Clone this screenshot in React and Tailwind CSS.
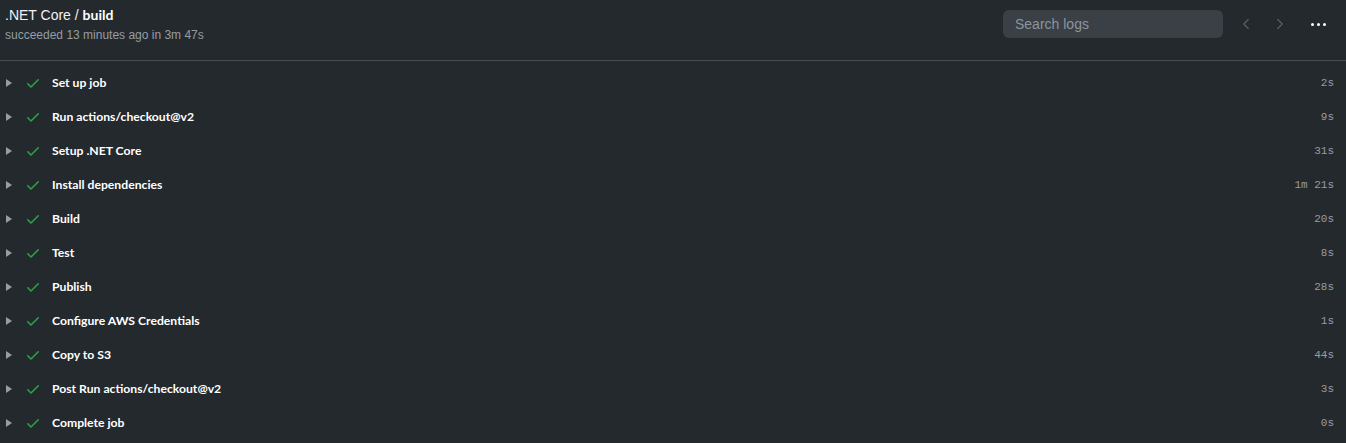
import { ChevronLeft, ChevronRight } from "lucide-react"

const steps = [
  ["Set up job", "2s"],
  ["Run actions/checkout@v2", "9s"],
  ["Setup .NET Core", "31s"],
  ["Install dependencies", "1m 21s"],
  ["Build", "20s"],
  ["Test", "8s"],
  ["Publish", "28s"],
  ["Configure AWS Credentials", "1s"],
  ["Copy to S3", "44s"],
  ["Post Run actions/checkout@v2", "3s"],
  ["Complete job", "0s"],
]

const Check = () => (
  <svg width="16" height="16" viewBox="0 0 16 16" className="text-[#28a745]">
    <path
      fill="currentColor"
      fillRule="evenodd"
      d="M13.78 4.22a.75.75 0 010 1.06l-7.25 7.25a.75.75 0 01-1.06 0L2.22 9.28a.75.75 0 011.06-1.06L6 10.94l6.72-6.72a.75.75 0 011.06 0z"
    />
  </svg>
)

const Caret = () => (
  <svg width="8" height="10" viewBox="0 0 8 10" className="text-[#959da5]">
    <path fill="currentColor" d="M1 1l6 4-6 4z" />
  </svg>
)

const App = () => {
  return (
    <div
      className="min-h-screen w-full bg-[#24292e] text-[#e1e4e8]"
      style={{ fontFamily: '"Segoe UI", "Liberation Sans", "Noto Sans", sans-serif' }}
    >
      {/* Header */}
      <div className="flex items-start h-[61px] pl-[5px] pr-[20px] pt-[5px] border-b border-[#444d56]">
        <div className="flex-1">
          <div className="text-[14px] leading-[20px] text-[#f0f2f4]">
            .NET Core / <span className="font-bold text-white font-[Lato]">build</span>
          </div>
          <div className="text-[12px] leading-[20px] text-[#959da5]">
            succeeded 13 minutes ago in 3m 47s
          </div>
        </div>
        <div className="flex items-center mt-[5px]">
          <div className="w-[220px] h-[28px] rounded-[6px] bg-[#3b4046] flex items-center px-[12px] text-[14px] text-[#8b949e]">
            Search logs
          </div>
          <div className="flex items-center gap-[16px] ml-[14px] text-[#5a6169]">
            <ChevronLeft size={18} strokeWidth={1.5} />
            <ChevronRight size={18} strokeWidth={1.5} />
          </div>
          <div className="flex items-center gap-[3px] ml-[22px]">
            <span className="w-[3px] h-[3px] rounded-full bg-white" />
            <span className="w-[3px] h-[3px] rounded-full bg-white" />
            <span className="w-[3px] h-[3px] rounded-full bg-white" />
          </div>
        </div>
      </div>

      {/* Steps */}
      <div className="pt-[5px]">
        {steps.map(([name, time]) => (
          <div key={name} className="flex items-center h-[34px] pl-[5px] pr-[12px]">
            <Caret />
            <div className="ml-[12px]">
              <Check />
            </div>
            <div className="ml-[11px] flex-1 text-[12.2px] font-bold text-white font-[Lato]">{name}</div>
            <div
              className="text-[11px] text-[#959da5]"
              style={{ fontFamily: '"Liberation Mono", "DejaVu Sans Mono", monospace' }}
            >
              {time}
            </div>
          </div>
        ))}
      </div>
    </div>
  )
}

export default App
